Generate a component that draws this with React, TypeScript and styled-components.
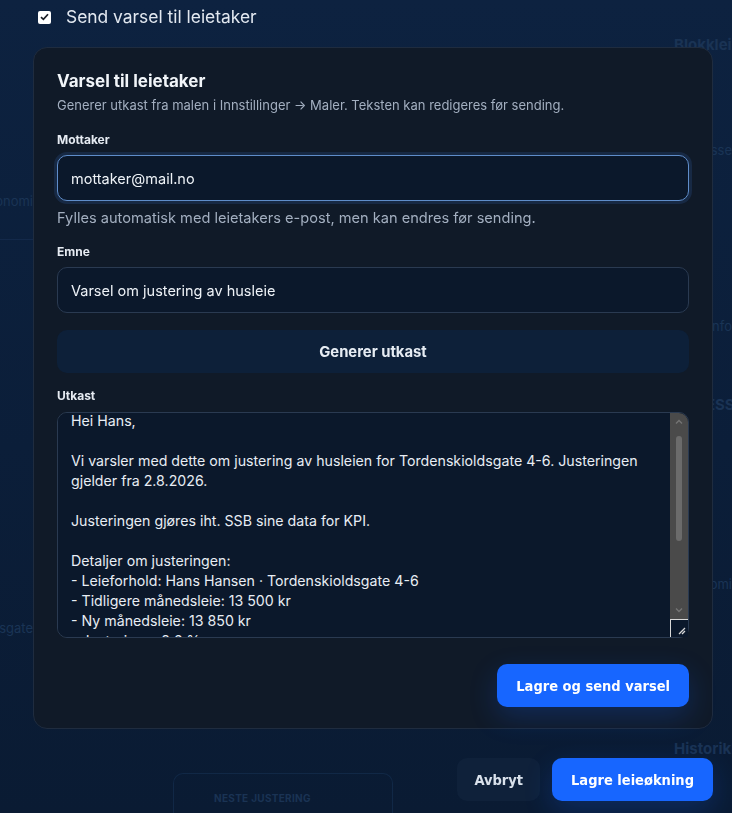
import React, { useEffect, useRef } from "react";
import styled, { createGlobalStyle } from "styled-components";

const DRAFT = `Hei Hans,

Vi varsler med dette om justering av husleien for Tordenskioldsgate 4-6. Justeringen gjelder fra 2.8.2026.

Justeringen gjøres iht. SSB sine data for KPI.

Detaljer om justeringen:
- Leieforhold: Hans Hansen · Tordenskioldsgate 4-6
- Tidligere månedsleie: 13 500 kr
- Ny månedsleie: 13 850 kr
- Justering: +2.6 %

Ta gjerne kontakt dersom du har spørsmål.

Vennlig hilsen
Utleier`;

const Chevron = ({ up }: { up?: boolean }) => (
  <svg width="10" height="10" viewBox="0 0 10 10">
    <path
      d={up ? "M2 6.5 L5 3.5 L8 6.5" : "M2 3.5 L5 6.5 L8 3.5"}
      fill="none"
      stroke="#747474"
      strokeWidth="1.4"
    />
  </svg>
);

const App = () => {
  const mailRef = useRef<HTMLInputElement>(null);
  const draftRef = useRef<HTMLTextAreaElement>(null);

  useEffect(() => {
    const el = mailRef.current;
    if (el) {
      el.focus();
      el.setSelectionRange(el.value.length, el.value.length);
    }
    if (draftRef.current) draftRef.current.scrollTop = 14;
  }, []);

  return (
    <>
      <GlobalStyle />
      <Behind>
        <LeftCol>
          <Faint $top={193}>Økonomi</Faint>
          <FaintLine $top={30} />
          <Faint $top={380}>Tordenskioldsgate</Faint>
        </LeftCol>
        <CenterCol>
          <NextCard>
            <CardCaption>Neste justering</CardCaption>
          </NextCard>
        </CenterCol>
        <RightCol>
          <FaintTitle $top={36}>Blokkleilighet</FaintTitle>
          <Faint $top={88}>Adresse</Faint>
          <Faint $top={160}>Tilleggsinfo</Faint>
          <FaintTitle $top={62}>ADRESSE</FaintTitle>
          <Faint $top={162}>Økonomi</Faint>
          <FaintTitle $top={148}>Historikk</FaintTitle>
        </RightCol>
      </Behind>

      <Overlay>
        <Modal>
          <CheckRow>
            <CheckBox>
              <svg width="9" height="8" viewBox="0 0 9 8">
                <path d="M1 4.2 L3.4 6.4 L8 1.2" fill="none" stroke="#1b1f27" strokeWidth="1.7" />
              </svg>
            </CheckBox>
            Send varsel til leietaker
          </CheckRow>

          <Panel>
            <Title>Varsel til leietaker</Title>
            <Sub>Generer utkast fra malen i Innstillinger → Maler. Teksten kan redigeres før sending.</Sub>

            <Label $gap={18}>Mottaker</Label>
            <Input ref={mailRef} defaultValue="mottaker@mail.no" />
            <Helper>Fylles automatisk med leietakers e-post, men kan endres før sending.</Helper>

            <Label $gap={16}>Emne</Label>
            <Input defaultValue="Varsel om justering av husleie" />

            <GhostButton>Generer utkast</GhostButton>

            <Label $gap={15}>Utkast</Label>
            <DraftBox>
              <Draft ref={draftRef} defaultValue={DRAFT} />
              <ScrollRail aria-hidden>
                <RailArrow>
                  <Chevron up />
                </RailArrow>
                <RailTrack>
                  <RailThumb />
                </RailTrack>
                <RailArrow>
                  <Chevron />
                </RailArrow>
                <Resizer>
                  <svg width="17" height="17" viewBox="0 0 17 17">
                    <path d="M8 14 L14 8 M11 14 L14 11" stroke="#d8d8d8" strokeWidth="1.3" />
                  </svg>
                </Resizer>
              </ScrollRail>
            </DraftBox>

            <Actions>
              <PrimaryButton>Lagre og send varsel</PrimaryButton>
            </Actions>
          </Panel>

          <Footer>
            <SecondaryButton>Avbryt</SecondaryButton>
            <PrimaryButton>Lagre leieøkning</PrimaryButton>
          </Footer>
        </Modal>
      </Overlay>
    </>
  );
};

export default App;

const GlobalStyle = createGlobalStyle`
  html, body {
    margin: 0;
    padding: 0;
    height: 100%;
  }
  body {
    background: linear-gradient(180deg, #0d2240 0%, #0b1e39 55%, #0a1b33 100%);
    font-family: Inter, "Noto Sans", sans-serif;
    color: #e8edf4;
    overflow: hidden;
  }
  #root {
    height: 100%;
  }
`;

const Behind = styled.div`
  display: grid;
  grid-template-columns: 33px 1fr 60px;
  height: 100vh;
  overflow: hidden;
  font-family: Inter, sans-serif;
`;

const LeftCol = styled.div`
  display: flex;
  flex-direction: column;
  overflow: hidden;
`;

const CenterCol = styled.div`
  display: flex;
  flex-direction: column;
  justify-content: flex-end;
  padding-left: 140px;
`;

const RightCol = styled.div`
  display: flex;
  flex-direction: column;
  overflow: hidden;
  padding-left: 2px;
`;

const Faint = styled.div<{ $top: number }>`
  display: flex;
  justify-content: flex-end;
  margin-top: ${(p) => p.$top}px;
  white-space: nowrap;
  font-size: 13px;
  line-height: 16px;
  color: #1a3455;
`;

const FaintTitle = styled.div<{ $top: number }>`
  margin-top: ${(p) => p.$top}px;
  white-space: nowrap;
  font-size: 15px;
  font-weight: 700;
  line-height: 18px;
  color: #1a3354;
`;

const FaintLine = styled.div<{ $top: number }>`
  margin-top: ${(p) => p.$top}px;
  height: 1px;
  background: #13294a;
`;

const NextCard = styled.div`
  width: 220px;
  height: 40px;
  border: 1px solid #112846;
  border-bottom: none;
  border-radius: 10px 10px 0 0;
  padding: 18px 0 0 40px;
  box-sizing: border-box;
`;

const CardCaption = styled.div`
  font-size: 10px;
  font-weight: 700;
  letter-spacing: 0.3px;
  text-transform: uppercase;
  color: #1a3354;
`;

const Overlay = styled.div`
  position: fixed;
  inset: 0;
  overflow: hidden;
`;

const Modal = styled.div`
  width: 680px;
  margin-left: 33px;
  padding-top: 5px;
`;

const CheckRow = styled.label`
  display: flex;
  align-items: center;
  gap: 15px;
  padding-left: 5px;
  font-size: 17.4px;
  line-height: 24px;
  color: #e2e8f0;
`;

const CheckBox = styled.span`
  display: flex;
  align-items: center;
  justify-content: center;
  width: 13px;
  height: 13px;
  border-radius: 2px;
  background: #ffffff;
`;

const Panel = styled.section`
  margin-top: 18px;
  padding: 22px 23px 21px;
  background: #101a28;
  border: 1px solid #1f2c3f;
  border-radius: 14px;
`;

const Title = styled.h2`
  margin: 0;
  font-size: 17px;
  font-weight: 700;
  line-height: 22px;
  color: #f1f5f9;
`;

const Sub = styled.p`
  margin: 4px 0 0;
  font-size: 13px;
  line-height: 18px;
  color: #a3afc0;
`;

const Label = styled.div<{ $gap: number }>`
  margin-top: ${(p) => p.$gap}px;
  font-size: 12px;
  font-weight: 700;
  line-height: 16px;
  color: #e6ebf2;
`;

const Input = styled.input`
  display: block;
  box-sizing: border-box;
  width: 100%;
  height: 46px;
  margin-top: 7px;
  padding: 0 13px;
  background: #0b182b;
  border: 1px solid #2a3a51;
  border-radius: 10px;
  font-family: inherit;
  font-size: 14.5px;
  color: #eef2f7;
  outline: none;
  &:focus {
    border-color: #5f8dca;
    box-shadow: 0 0 0 3px rgba(48, 96, 170, 0.22);
  }
`;

const Helper = styled.p`
  margin: 7px 0 0;
  font-size: 14.6px;
  line-height: 20px;
  color: #a3afc0;
`;

const GhostButton = styled.button`
  display: block;
  width: 100%;
  height: 43px;
  margin-top: 17px;
  border: none;
  border-radius: 10px;
  background: #0d2039;
  font-family: inherit;
  font-size: 14.8px;
  font-weight: 700;
  color: #e6ecf3;
`;

const DraftBox = styled.div`
  position: relative;
  margin-top: 8px;
`;

const Draft = styled.textarea`
  display: block;
  box-sizing: border-box;
  width: 100%;
  height: 226px;
  padding: 12px 31px 12px 13px;
  background: #0b182b;
  border: 1px solid #2a3a51;
  border-radius: 10px;
  font-family: inherit;
  font-size: 14.2px;
  line-height: 20px;
  color: #e8edf4;
  color-scheme: dark;
  resize: none;
  outline: none;
`;

const ScrollRail = styled.div`
  position: absolute;
  top: 1px;
  right: 1px;
  bottom: 1px;
  width: 18px;
  display: flex;
  flex-direction: column;
  background: #4a4a4a;
  border-top-right-radius: 9px;
  pointer-events: none;
`;

const RailArrow = styled.div`
  display: flex;
  align-items: center;
  justify-content: center;
  height: 18px;
`;

const RailTrack = styled.div`
  flex: 1;
  display: flex;
  justify-content: center;
  padding-top: 5px;
`;

const RailThumb = styled.div`
  width: 6px;
  height: 105px;
  border-radius: 3px;
  background: #6b6b6b;
`;

const Resizer = styled.div`
  display: flex;
  height: 17px;
  background: #0b182b;
  border-top: 1px solid #d8d8d8;
  border-left: 1px solid #d8d8d8;
`;

const Actions = styled.div`
  display: flex;
  justify-content: flex-end;
  margin-top: 26px;
`;

const Footer = styled.div`
  display: flex;
  justify-content: flex-end;
  gap: 12px;
  margin-top: 29px;
`;

const PrimaryButton = styled.button`
  height: 43px;
  padding: 0 19px;
  border: none;
  border-radius: 10px;
  background: #1766ff;
  box-shadow: 0 10px 28px rgba(23, 102, 255, 0.22);
  font-family: "DejaVu Sans Condensed", "DejaVu Sans", sans-serif;
  font-stretch: condensed;
  font-size: 14.5px;
  font-weight: 700;
  color: #ffffff;
`;

const SecondaryButton = styled(PrimaryButton)`
  padding: 0 17px;
  background: #0f213a;
  box-shadow: none;
  color: #d9e1eb;
`;
